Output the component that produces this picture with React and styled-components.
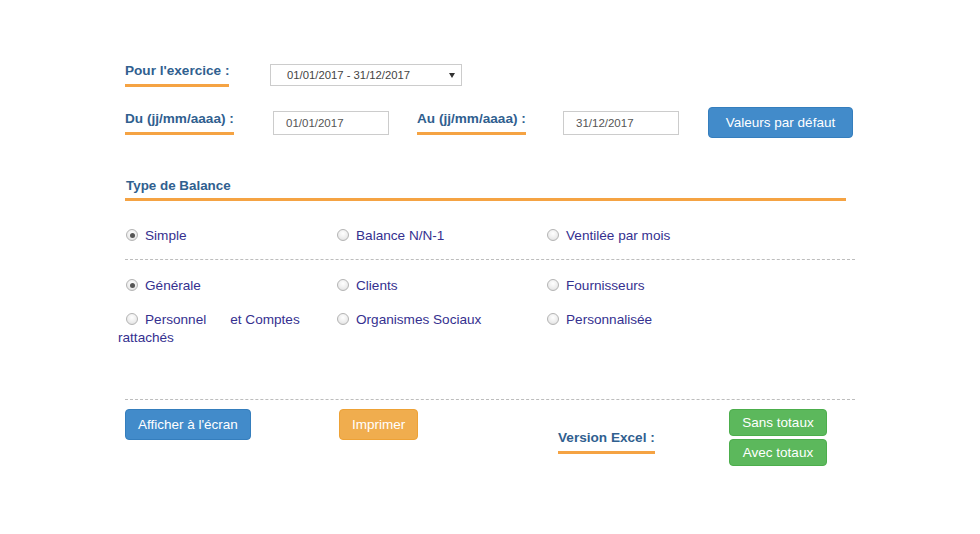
import React from 'react';
import styled, { createGlobalStyle } from 'styled-components';

const GlobalStyle = createGlobalStyle`
  body {
    margin: 0;
    background: #fff;
    font-family: "Liberation Sans", Arial, sans-serif;
  }
`;

const Page = styled.div`
  width: 980px;
  height: 534px;
  box-sizing: border-box;
  padding: 64px 0 0 125px;
`;

const Row = styled.div`
  display: flex;
  align-items: center;
  height: ${p => p.$h}px;
  margin-top: ${p => p.$mt || 0}px;
`;

const Cell = styled.div`
  width: ${p => p.$w}px;
  flex: none;
  display: flex;
  align-items: center;
`;

const Label = styled.span`
  display: inline-block;
  font-size: 13.6px;
  font-weight: bold;
  line-height: 15px;
  color: #30608f;
  padding-bottom: 6px;
  border-bottom: 3px solid #f5a343;
`;

const Select = styled.div`
  width: 192px;
  height: 22px;
  box-sizing: border-box;
  border: 1px solid #ccc;
  display: flex;
  align-items: center;
  justify-content: space-between;
  padding: 0 6px 0 16px;
  font-size: 11.3px;
  color: #444;
`;

const Arrow = styled.span`
  width: 0;
  height: 0;
  border-left: 3px solid transparent;
  border-right: 3px solid transparent;
  border-top: 5px solid #333;
`;

const Input = styled.div`
  width: 116px;
  height: 24px;
  box-sizing: border-box;
  border: 1px solid #ccc;
  display: flex;
  align-items: center;
  padding-left: 12px;
  font-size: 11.5px;
  color: #555;
`;

const Button = styled.button`
  font-family: inherit;
  font-size: 13.5px;
  color: #fff;
  height: ${p => p.$h || 31}px;
  min-width: ${p => p.$minw || 0}px;
  padding: 0 12px;
  border-radius: 4px;
  border: 1px solid ${p => p.$border};
  background: ${p => p.$bg};
  cursor: pointer;
`;

const Heading = styled.div`
  width: 720px;
  margin-top: 40px;
  padding: 0 0 5px 1px;
  font-size: 13.4px;
  font-weight: bold;
  line-height: 15px;
  color: #30608f;
  border-bottom: 3px solid #f5a343;
`;

const RadioGrid = styled.div`
  display: grid;
  grid-template-columns: 211px 210px 1fr;
  margin-top: ${p => p.$mt}px;
  font-size: 13.6px;
  line-height: 18px;
  color: #35308f;
`;

const Option = styled.div`
  margin-left: ${p => (p.$hang ? -7 : 0)}px;
  text-indent: ${p => (p.$hang ? 7 : 0)}px;
`;

const Radio = styled.span`
  display: inline-block;
  position: relative;
  top: -1px;
  vertical-align: middle;
  width: 12px;
  height: 12px;
  box-sizing: border-box;
  margin: 0 7px 0 1px;
  border-radius: 50%;
  border: 1px solid #b4b4b4;
  background: radial-gradient(circle at 50% 35%, #fff 0%, #ececec 60%, #d6d6d6 100%);
  &::after {
    content: '';
    display: ${p => (p.$checked ? 'block' : 'none')};
    position: absolute;
    left: 2.5px;
    top: 2.5px;
    width: 5px;
    height: 5px;
    border-radius: 50%;
    background: #555;
  }
`;

const Spacer = styled.span`
  display: inline-block;
  width: ${p => p.$w}px;
`;

const Dashed = styled.div`
  width: 730px;
  margin-top: ${p => p.$mt}px;
  border-top: 1px dashed #bdbdbd;
`;

const Actions = styled.div`
  display: flex;
  align-items: flex-start;
  margin-top: 9px;
`;

const ExcelCell = styled.div`
  width: 171px;
  flex: none;
  padding-top: 19px;
`;

const Stack = styled.div`
  display: flex;
  flex-direction: column;
  gap: 3px;
`;

const blue = { $bg: '#428bca', $border: '#357ebd' };
const orange = { $bg: '#f0ad4e', $border: '#eea236' };
const green = { $bg: '#5cb85c', $border: '#4cae4c' };

const RadioRow = ({ items, mt }) => (
  <RadioGrid $mt={mt}>
    {items.map(it => (
      <Option key={it.key} $hang={it.hang}>
        <Radio $checked={it.checked} />
        {it.label}
      </Option>
    ))}
  </RadioGrid>
);

export default function App() {
  return (
    <>
      <GlobalStyle />
      <Page>
        <Row $h={22}>
          <Cell $w={145}><Label>Pour l'exercice :</Label></Cell>
          <Select>
            01/01/2017 - 31/12/2017
            <Arrow />
          </Select>
        </Row>

        <Row $h={31} $mt={21}>
          <Cell $w={148}><Label>Du (jj/mm/aaaa) :</Label></Cell>
          <Input>01/01/2017</Input>
          <Cell $w={28} />
          <Cell $w={146}><Label>Au (jj/mm/aaaa) :</Label></Cell>
          <Input>31/12/2017</Input>
          <Cell $w={29} />
          <Button {...blue} $minw={145}>Valeurs par défaut</Button>
        </Row>

        <Heading>Type de Balance</Heading>

        <RadioRow
          mt={26}
          items={[
            { key: 's', label: 'Simple', checked: true },
            { key: 'n', label: 'Balance N/N-1' },
            { key: 'v', label: 'Ventilée par mois' },
          ]}
        />

        <Dashed $mt={14} />

        <RadioRow
          mt={17}
          items={[
            { key: 'g', label: 'Générale', checked: true },
            { key: 'c', label: 'Clients' },
            { key: 'f', label: 'Fournisseurs' },
          ]}
        />
        <RadioRow
          mt={16}
          items={[
            {
              key: 'p',
              hang: true,
              label: (
                <>
                  Personnel<Spacer $w={24} />et Comptes rattachés
                </>
              ),
            },
            { key: 'o', label: 'Organismes Sociaux' },
            { key: 'x', label: 'Personnalisée' },
          ]}
        />

        <Dashed $mt={52} />

        <Actions>
          <Cell $w={214}><Button {...blue}>Afficher à l'écran</Button></Cell>
          <Cell $w={219}><Button {...orange}>Imprimer</Button></Cell>
          <ExcelCell><Label>Version Excel :</Label></ExcelCell>
          <Stack>
            <Button {...green} $h={27} $minw={98}>Sans totaux</Button>
            <Button {...green} $h={27} $minw={98}>Avec totaux</Button>
          </Stack>
        </Actions>
      </Page>
    </>
  );
}
